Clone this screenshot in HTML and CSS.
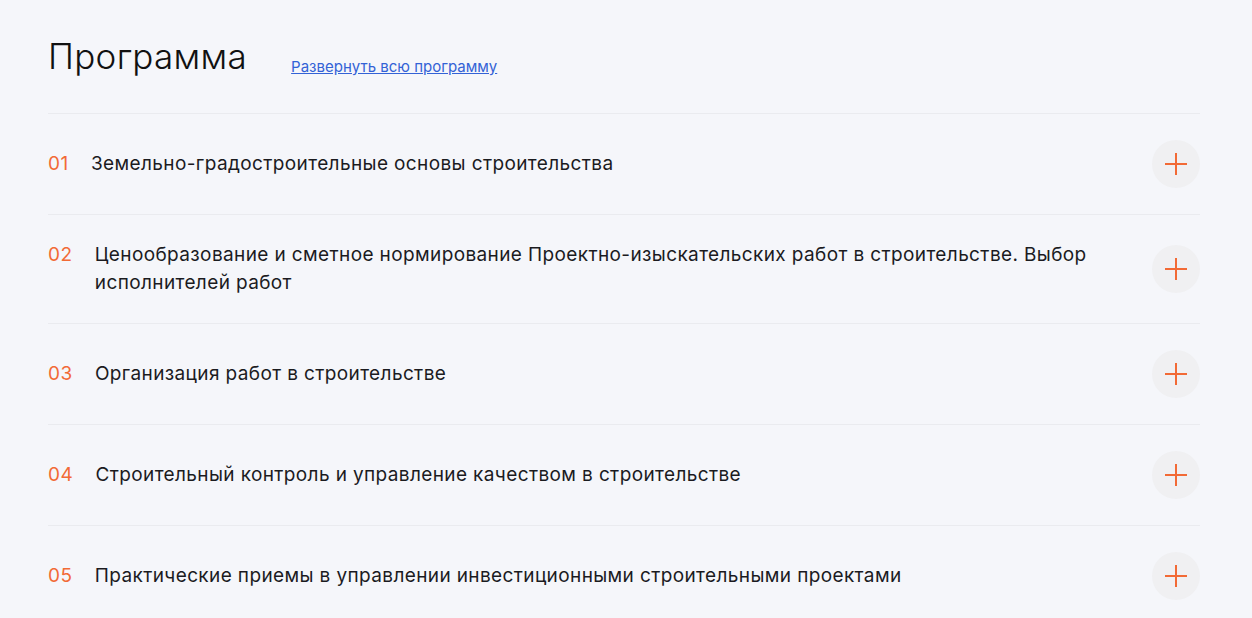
FILE: index.html
```html
<!DOCTYPE html>
<html lang="ru">
<head>
  <meta charset="UTF-8" />
  <meta name="viewport" content="width=device-width, initial-scale=1.0"/>
  <title>Программа</title>
  <link rel="stylesheet" href="styles.css">
</head>
<body>
  <section class="program">
    <div class="program-head">
      <h2 class="program-title">Программа</h2>
      <a href="#" class="expand-link">Развернуть всю программу</a>
    </div>

    <div class="module">
      <div class="module-info">
        <span class="module-num">01</span>
        <span class="module-name">Земельно-градостроительные основы строительства</span>
      </div>
      <button class="module-toggle" aria-label="Открыть">
        <svg width="22" height="22" viewBox="0 0 22 22"><path d="M11 0v22M0 11h22" stroke="#f26a36" stroke-width="2" fill="none"/></svg>
      </button>
    </div>

    <div class="module">
      <div class="module-info">
        <span class="module-num">02</span>
        <span class="module-name">Ценообразование и сметное нормирование Проектно-изыскательских работ в строительстве. Выбор исполнителей работ</span>
      </div>
      <button class="module-toggle" aria-label="Открыть">
        <svg width="22" height="22" viewBox="0 0 22 22"><path d="M11 0v22M0 11h22" stroke="#f26a36" stroke-width="2" fill="none"/></svg>
      </button>
    </div>

    <div class="module">
      <div class="module-info">
        <span class="module-num">03</span>
        <span class="module-name">Организация работ в строительстве</span>
      </div>
      <button class="module-toggle" aria-label="Открыть">
        <svg width="22" height="22" viewBox="0 0 22 22"><path d="M11 0v22M0 11h22" stroke="#f26a36" stroke-width="2" fill="none"/></svg>
      </button>
    </div>

    <div class="module">
      <div class="module-info">
        <span class="module-num">04</span>
        <span class="module-name">Строительный контроль и управление качеством в строительстве</span>
      </div>
      <button class="module-toggle" aria-label="Открыть">
        <svg width="22" height="22" viewBox="0 0 22 22"><path d="M11 0v22M0 11h22" stroke="#f26a36" stroke-width="2" fill="none"/></svg>
      </button>
    </div>

    <div class="module">
      <div class="module-info">
        <span class="module-num">05</span>
        <span class="module-name">Практические приемы в управлении инвестиционными строительными проектами</span>
      </div>
      <button class="module-toggle" aria-label="Открыть">
        <svg width="22" height="22" viewBox="0 0 22 22"><path d="M11 0v22M0 11h22" stroke="#f26a36" stroke-width="2" fill="none"/></svg>
      </button>
    </div>
  </section>
</body>
</html>
```

FILE: styles.css
```css
body {
  margin: 0;
  background: #f5f6fa;
  font-family: 'Inter', 'Noto Sans', sans-serif;
  color: #1b1b1f;
}

.program {
  width: 1152px;
  margin-left: 48px;
}

.program-head {
  display: flex;
  align-items: flex-start;
  gap: 44px;
  height: 113px;
  box-sizing: border-box;
  padding-top: 34px;
}

.program-title {
  margin: 0;
  font-size: 35px;
  font-weight: 300;
  line-height: 44px;
  letter-spacing: 0.3px;
  color: #111;
}

.expand-link {
  margin-top: 24px;
  font-size: 15px;
  line-height: 18px;
  color: #3362d6;
  text-decoration: underline;
}

.module {
  display: flex;
  align-items: center;
  justify-content: space-between;
  border-top: 1px solid #eaebef;
  padding: 26px 0;
}

.module-info {
  display: flex;
  align-items: flex-start;
  gap: 22px;
  padding-right: 50px;
}

.module-num {
  font-size: 19px;
  line-height: 28px;
  letter-spacing: 0.6px;
  color: #f26a36;
}

.module-name {
  font-size: 19px;
  line-height: 28px;
  letter-spacing: 0.38px;
}

.module-toggle {
  flex-shrink: 0;
  width: 48px;
  height: 48px;
  border: none;
  border-radius: 50%;
  background: #f0f0f2;
  display: flex;
  align-items: center;
  justify-content: center;
  padding: 0;
  cursor: pointer;
}
```
